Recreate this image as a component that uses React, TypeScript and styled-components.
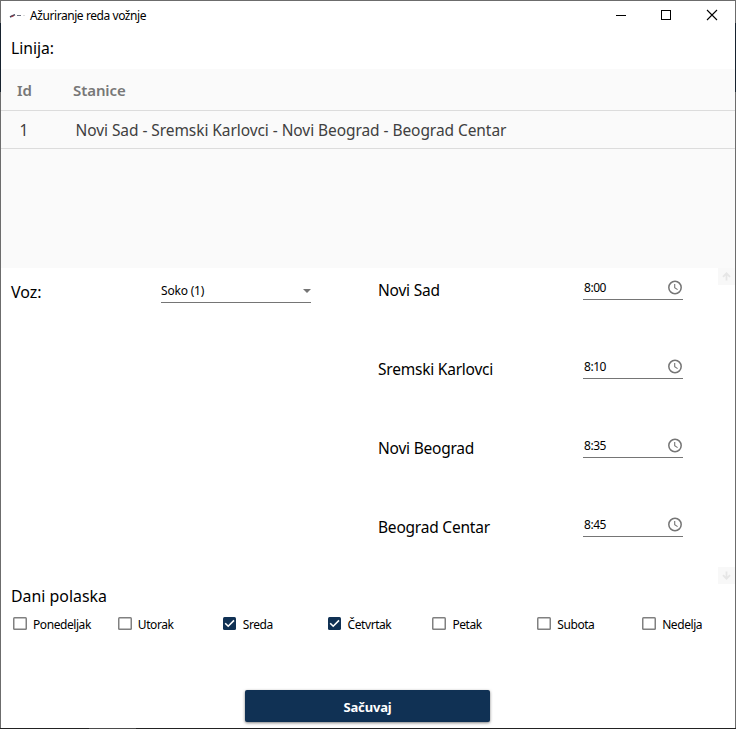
import React from "react";
import styled, { createGlobalStyle } from "styled-components";

const GlobalStyle = createGlobalStyle`
  * { box-sizing: border-box; }
  body { margin: 0; background: #fff; overflow: hidden; font-family: "Noto Sans", "Open Sans", sans-serif; color: #000; }
`;

const Window = styled.div`
  width: 736px;
  height: 729px;
  display: grid;
  grid-template-columns: 1px 734px 1px;
  grid-template-rows: 1px 727px 1px;
  background: #fff;
`;

const TopEdge = styled.div`
  grid-column: 1 / 4;
  background: #6c6c6c;
`;

const SideEdge = styled.div`
  background: linear-gradient(#6c6c6c 22px, #17222e 22px, #17222e 91px, #6c6c6c 91px);
`;

const BottomEdge = styled.div`
  grid-column: 1 / 4;
  background: linear-gradient(90deg, #222 89px, #4a4a4a 89px, #4a4a4a 136px, #222 136px);
`;

const Content = styled.div`
  display: flex;
  flex-direction: column;
`;

const Text = styled.span<{ $size?: number; $spacing?: number }>`
  display: inline-block;
  font-size: ${(p) => p.$size ?? 15}px;
  letter-spacing: ${(p) => p.$spacing ?? 0}px;
  line-height: 20px;
  white-space: nowrap;
`;

const TitleBar = styled.header`
  height: 30px;
  display: flex;
  align-items: center;
  padding-left: 8px;
`;

const TitleText = styled(Text)`
  flex: 1;
  padding-left: 5px;
`;

const CaptionIcon = styled.svg`
  width: 46px;
  height: 30px;
  flex: none;
`;

const LineLabel = styled.div`
  height: 38px;
  padding: 6px 10px;
`;

const Table = styled.section`
  height: 199px;
  background: #fafafa;
`;

const TableRow = styled.div<{ $header?: boolean }>`
  display: grid;
  grid-template-columns: 56px 1fr;
  align-items: center;
  height: ${(p) => (p.$header ? 42 : 38)}px;
  padding-left: ${(p) => (p.$header ? 16 : 18.5)}px;
  padding-top: ${(p) => (p.$header ? 1 : 0)}px;
  border-bottom: 1px solid #dcdcdc;
  color: ${(p) => (p.$header ? "#777" : "#404040")};
  font-weight: ${(p) => (p.$header ? 600 : 400)};
`;

const Form = styled.section`
  height: 316px;
  display: grid;
  grid-template-columns: 150px 217px 350px 17px;
`;

const TrainLabel = styled.div`
  padding: 13px 10px;
`;

const Select = styled.div`
  width: 150px;
  height: 35px;
  margin-left: 10px;
  padding-top: 11px;
  display: flex;
  justify-content: space-between;
  align-items: center;
  border-bottom: 1px solid #757575;
`;

const Stops = styled.div`
  padding-left: 10px;
`;

const Stop = styled.div`
  height: 79px;
  display: grid;
  grid-template-columns: 205px 100px;
  align-items: start;
`;

const StopName = styled.div`
  padding-top: 11px;
`;

const TimeField = styled.div`
  height: 32px;
  display: flex;
  justify-content: space-between;
  align-items: center;
  padding: 8px 0 0 1px;
  border-bottom: 1px solid #757575;
`;

const ScrollTrack = styled.div`
  display: flex;
  flex-direction: column;
  justify-content: space-between;
`;

const ScrollButton = styled.div`
  width: 17px;
  height: 17px;
  display: grid;
  place-items: center;
  background: #f8f8f8;
`;

const DaysTitle = styled.div`
  height: 33px;
  padding: 1px 10px 0;
`;

const Days = styled.div`
  display: grid;
  grid-template-columns: repeat(7, 104.86px);
  padding-left: 12px;
`;

const Day = styled.label`
  display: flex;
  align-items: center;
  height: 13px;
`;

const BoxCell = styled.span`
  width: 20px;
  height: 13px;
  flex: none;
`;

const DayName = styled(Text)`
  padding-top: 2px;
`;

const Box = styled.span<{ $checked?: boolean }>`
  display: block;
  width: ${(p) => (p.$checked ? 13 : 14)}px;
  height: 13px;
  box-shadow: ${(p) => (p.$checked ? "none" : "inset 0 0 0 1.5px #808080")};
  border-radius: 1.5px;
  background: ${(p) => (p.$checked ? "#103154" : "#fff")};

  svg { display: block; }
`;

const SaveButton = styled.button`
  width: 245px;
  height: 32px;
  margin: 60px 0 0 244px;
  padding: 2px 0 0;
  border: 0;
  border-radius: 2px;
  background: #103154;
  color: #fff;
  font-family: inherit;
  font-weight: 700;
  box-shadow: 0 1px 3px rgba(0, 0, 0, 0.5);
`;

const Train = () => (
  <svg width="16" height="16" viewBox="0 0 16 16" fill="none">
    <path d="M1 9L3 8L6 6.6" stroke="#3b4358" strokeWidth="1.5" />
    <path d="M2.5 8.6L4.5 7.7" stroke="#b63c48" strokeWidth="1.2" />
    <path d="M8 7.5h4" stroke="#6a6f80" />
    <path d="M14.5 7.5h1" stroke="#bbb" />
  </svg>
);

const Clock = () => (
  <svg width="16" height="16" viewBox="0 0 16 16" fill="none" stroke="#757575">
    <circle cx="8" cy="7.5" r="6.2" strokeWidth="1.5" />
    <path d="M7.7 4.1v3.7l2.9 1.8" strokeWidth="1.1" />
  </svg>
);

const Arrow = ({ down }: { down?: boolean }) => (
  <svg width="9" height="9" viewBox="0 0 9 9" fill="none" stroke="#e6e6e6" strokeWidth="1.8">
    <path d={down ? "M4.5 0.5v7.5M1 4.2l3.5 3.5L8 4.2" : "M4.5 8.5V1M1 4.8L4.5 1.3L8 4.8"} />
  </svg>
);

const stops = [
  { name: "Novi Sad", time: "8:00" },
  { name: "Sremski Karlovci", time: "8:10" },
  { name: "Novi Beograd", time: "8:35" },
  { name: "Beograd Centar", time: "8:45" },
];

const days = [
  { name: "Ponedeljak" },
  { name: "Utorak" },
  { name: "Sreda", checked: true },
  { name: "Četvrtak", checked: true },
  { name: "Petak" },
  { name: "Subota" },
  { name: "Nedelja" },
];

export default function App() {
  return (
    <>
      <GlobalStyle />
      <Window>
        <TopEdge />
        <SideEdge />
        <Content>
          <TitleBar>
            <Train />
            <TitleText $size={12} $spacing={-0.43}>Ažuriranje reda vožnje</TitleText>
            <CaptionIcon viewBox="0 0 46 30"><path d="M19 14.5h10" stroke="#000" /></CaptionIcon>
            <CaptionIcon viewBox="0 0 46 30"><rect x="18.5" y="9.5" width="9" height="9" fill="none" stroke="#000" /></CaptionIcon>
            <CaptionIcon viewBox="0 0 46 30"><path d="M18 9l10 10M28 9l-10 10" stroke="#000" strokeWidth="1.1" /></CaptionIcon>
          </TitleBar>
          <LineLabel><Text $size={15.7}>Linija:</Text></LineLabel>
          <Table>
            <TableRow $header><Text $spacing={-0.1}>Id</Text><Text $spacing={-0.08}>Stanice</Text></TableRow>
            <TableRow>
              <Text $size={15.5}>1</Text>
              <Text $size={15.5} $spacing={-0.07}>Novi Sad - Sremski Karlovci - Novi Beograd - Beograd Centar</Text>
            </TableRow>
          </Table>
          <Form>
            <TrainLabel><Text $size={16}>Voz:</Text></TrainLabel>
            <Select>
              <Text $size={12} $spacing={-0.2}>Soko (1)</Text>
              <svg width="8" height="4" viewBox="0 0 8 4"><path d="M0 0h8L4 4z" fill="#757575" /></svg>
            </Select>
            <Stops>
              {stops.map((s) => (
                <Stop key={s.name}>
                  <StopName><Text $size={15.5} $spacing={-0.22}>{s.name}</Text></StopName>
                  <TimeField><Text $size={12} $spacing={-0.45}>{s.time}</Text><Clock /></TimeField>
                </Stop>
              ))}
            </Stops>
            <ScrollTrack>
              <ScrollButton><Arrow /></ScrollButton>
              <ScrollButton><Arrow down /></ScrollButton>
            </ScrollTrack>
          </Form>
          <DaysTitle><Text $size={15.9}>Dani polaska</Text></DaysTitle>
          <Days>
            {days.map((d) => (
              <Day key={d.name}>
                <BoxCell>
                  <Box $checked={d.checked}>
                    {d.checked && (
                      <svg width="13" height="13" viewBox="0 0 13 13"><path d="M2.2 6.2l3 3L11 3.4" fill="none" stroke="#fff" strokeWidth="1.6" /></svg>
                    )}
                  </Box>
                </BoxCell>
                <DayName $size={12} $spacing={-0.43}>{d.name}</DayName>
              </Day>
            ))}
          </Days>
          <SaveButton><Text $size={13} $spacing={-0.15}>Sačuvaj</Text></SaveButton>
        </Content>
        <SideEdge />
        <BottomEdge />
      </Window>
    </>
  );
}
